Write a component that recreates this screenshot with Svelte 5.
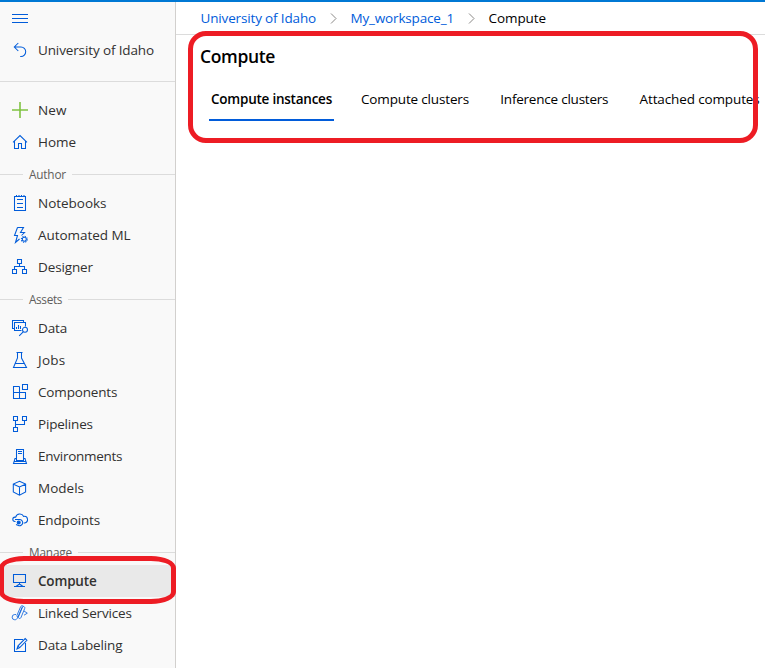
<script>
  // Tracks each label out or in so that it takes exactly the given width.
  function fit(node, width) {
    const n = node.textContent.length;
    const natural = node.getBoundingClientRect().width;
    node.style.letterSpacing = `${(width - natural) / n}px`;
  }

  const sections = [
    {
      title: null,
      items: [
        { icon: 'plus', label: 'New', w: 28.5 },
        { icon: 'home', label: 'Home', w: 38 }
      ]
    },
    {
      title: 'Author',
      w: 37,
      items: [
        { icon: 'notebook', label: 'Notebooks', w: 68.5 },
        { icon: 'automl', label: 'Automated ML', w: 92.5 },
        { icon: 'designer', label: 'Designer', w: 55 }
      ]
    },
    {
      title: 'Assets',
      w: 33,
      items: [
        { icon: 'data', label: 'Data', w: 29 },
        { icon: 'jobs', label: 'Jobs', w: 27.5 },
        { icon: 'components', label: 'Components', w: 79.3 },
        { icon: 'pipelines', label: 'Pipelines', w: 54.8 },
        { icon: 'environments', label: 'Environments', w: 84.3 },
        { icon: 'models', label: 'Models', w: 46 },
        { icon: 'endpoints', label: 'Endpoints', w: 62 }
      ]
    },
    {
      title: 'Manage',
      w: 43,
      items: [
        { icon: 'compute', label: 'Compute', w: 58.5, active: true },
        { icon: 'linked', label: 'Linked Services', w: 93.7 },
        { icon: 'labeling', label: 'Data Labeling', w: 84.5 }
      ]
    }
  ];

  const icons = {
    back: 'M6.300 1 2.300 5l4 4M2.500 5h6.500a4.700 4.700 0 0 1 0 9.400h-.8',
    plus: 'M8 0v16M0 8h16',
    home: 'M1 8.300 8 1.600l7 6.700M2.500 7v7.500h4V9.500h3v5h4V7',
    notebook: 'M2.500 1.500h11v14h-11zM5 4.500h6M5 8.500h6M5 12.500h6M4.500 0v2M7 0v2M9.500 0v2M12 0v2',
    automl: 'M5.500.5h6L8.500 5.500h4L9.500 8.500M5.500.5 2.500 8.500h3L3.500 15.500l4-3.500',
    designer: 'M5.500.5h4v4h-4zM.5 10.500h4v4h-4zM10.500 10.500h4v4h-4zM7.500 4.500v3M2.500 10.500v-3h10v3',
    data: 'M2 8.500H.5v-8h11v2M9.500 10.500h-7v-8h11v4M4.500 9V7M6.500 9V5M8.500 9V6M11.200 11.800l-4 4',
    jobs: 'M4.500.5h6M5.500.5V6L1.500 15.500h13L9.500 6V.5M3.500 11.500h9',
    components: 'M7.500 2.500h-6v12h12v-6h-12M7.500 2.500v12M10.500.5h5v5h-5z',
    pipelines: 'M1.500.5h4v4h-4zM10.500.5h4v4h-4zM1.500 11.500h4v4h-4zM3.500 4.500v7M3.500 8.500h9v-4',
    environments: 'M4.500 12.500v-11h7v11zM6 3.500h4M6 5.500h4M4 10.500H3l-1.500 5h13l-1.500-5h-1M2 13.500h12',
    models: 'M7.500 1.300 13.600 4v8l-6.100 3.200L1.300 12V4zM1.500 4.200l6 2.800 6-2.800M7.500 7v8',
    endpoints: 'M3.500 9.500H3a2.200 2.200 0 0 1 0-4.400h.7a4.300 4.300 0 0 1 8-.7 3.300 3.300 0 0 1 1 6.600h-1M3 7.500h4.500a3.100 3.100 0 1 1-1 6L4 12.500',
    compute: 'M1.500 1.500h12v8h-12zM7.500 9.500v2M2 13.500h11M4 13.500l3.500-2.500 3.500 2.500',
    linked: 'M4 9.500H2.800a2.300 2.300 0 0 0 0 5.300c1.400 0 2.200-.8 2.700-2L10 2.500c.8-1.800 3.300-1 2.700 1L9 12.500c-.8 1.800-3 1-2.500-.8l4-9.500M6.500 11.500c-1 1-2 0-1.500-1.300L8.500 2c.6-1.300 1.600-1.700 3-.7M12 6l3.300 2.200-3.300 2',
    labeling: 'M11 2.500H2.500v12h11V6M5 12l1-3.200 7.200-7.200 1.700 1.700-7.200 7.200zM6 9l2 2'
  };
</script>

{#snippet glyph(name)}
  <svg class="icon {name}" viewBox="0 0 16 16" width="16" height="16" aria-hidden="true">
    <path d={icons[name]} />
    {#if name === 'automl'}
      <circle cx="12.300" cy="12.300" r="2" />
      <circle cx="12.300" cy="12.300" r="3" stroke-dasharray="1.200 1.156" />
    {:else if name === 'data'}
      <circle cx="13" cy="9.800" r="2.500" />
    {:else if name === 'endpoints'}
      <circle cx="6.700" cy="10.500" r="1.500" class="solid" />
    {/if}
  </svg>
{/snippet}

<div class="app">
  <nav class="sidebar">
    <div class="menu"><i></i><i></i><i></i></div>
    <div class="row back">{@render glyph('back')}<span use:fit={116}>University of Idaho</span></div>
    <div class="groups">
      {#each sections as s}
        {#if s.title}
          <div class="section"><span use:fit={s.w}>{s.title}</span></div>
        {/if}
        {#each s.items as item}
          <div class="row" class:active={item.active}>
            {@render glyph(item.icon)}<span use:fit={item.w}>{item.label}</span>
          </div>
        {/each}
      {/each}
    </div>
  </nav>

  <main>
    <header class="crumbs">
      <a href="#university"><span use:fit={115.5}>University of Idaho</span></a>
      <svg width="7" height="11" viewBox="0 0 7 11"><path d="M1 .5 6 5.500 1 10.500" /></svg>
      <a href="#workspace"><span use:fit={103.5}>My_workspace_1</span></a>
      <svg width="7" height="11" viewBox="0 0 7 11"><path d="M1 .5 6 5.500 1 10.500" /></svg>
      <span use:fit={57.5}>Compute</span>
    </header>
    <h1><span use:fit={75}>Compute</span></h1>
    <div class="tabs">
      <div class="tab selected"><span use:fit={121}>Compute instances</span></div>
      <div class="tab"><span use:fit={108}>Compute clusters</span></div>
      <div class="tab"><span use:fit={108}>Inference clusters</span></div>
      <div class="tab"><span use:fit={120}>Attached computes</span></div>
    </div>
  </main>

  <div class="mark mark-main"></div>
  <div class="mark mark-nav"></div>
</div>

<style>
  :global(body) { margin: 0; background: #fff; }
  .app {
    position: relative;
    box-sizing: border-box;
    display: flex;
    width: 765px;
    height: 668px;
    overflow: hidden;
    border-top: 2px solid #0078d4;
    background: #fff;
    color: #000;
    font: 13.500px/20px 'Open Sans', 'Noto Sans', sans-serif;
  }
  span { white-space: nowrap; }
  .sidebar {
    box-sizing: border-box;
    flex: none;
    width: 176px;
    border-right: 1px solid #d2d0ce;
    background: #f9f9f9;
    color: #323130;
  }
  .menu {
    display: flex;
    flex-direction: column;
    gap: 3px;
    height: 20px;
    padding: 12px 0 0 12px;
  }
  .menu i { width: 16px; height: 1px; background: #015cda; }
  .row {
    display: flex;
    align-items: center;
    gap: 10px;
    height: 32px;
    padding-left: 12px;
  }
  .groups { margin-top: 15px; padding-top: 12px; border-top: 1px solid #dcdcdc; }
  .active { background: #e9e9e9; font-weight: 600; }
  .section {
    display: flex;
    align-items: center;
    gap: 6px;
    height: 29px;
    box-sizing: border-box;
    padding-top: 4px;
    color: #605e5c;
    font-size: 11.800px;
  }
  .section span { padding-bottom: 2px; }
  .section::before, .section::after { content: ''; height: 1px; background: #dcdcdc; }
  .section::before { width: 23px; }
  .section::after { flex: 1; }
  .icon { flex: none; overflow: visible; }
  .icon path, .icon circle { fill: none; stroke: #015cda; stroke-width: 1.050; }
  .icon.linked path { stroke-width: .8; }
  .icon .solid { fill: #015cda; }
  .icon.plus path { stroke: #7fc241; stroke-width: 1.600; }
  main { flex: 1; min-width: 0; overflow: hidden; }
  .crumbs {
    display: flex;
    align-items: center;
    height: 32px;
    padding-left: 24.500px;
    border-bottom: 1px solid #dcdcdc;
  }
  .crumbs a { color: #015cda; text-decoration: none; }
  .crumbs svg { margin: 0 13.500px 0 14px; }
  .crumbs path { fill: none; stroke: #8a8886; }
  h1 {
    margin: 9px 0 0 24px;
    font-size: 17.500px;
    line-height: 24px;
    font-weight: 600;
  }
  .tabs { display: flex; gap: 27.300px; margin: 19px 0 0 33px; }
  .tab { flex: none; height: 32px; padding: 0 2px; line-height: 24px; }
  .selected { margin-right: -2.300px; font-weight: 600; border-bottom: 2px solid #015cda; }
  .mark { position: absolute; box-sizing: border-box; border: 5px solid #ed1c24; }
  .mark-main { left: 188px; top: 29px; width: 570px; height: 112px; border-radius: 18px; }
  .mark-nav { left: -1px; top: 554px; width: 177px; height: 48px; border-radius: 25px / 12px; }
</style>
